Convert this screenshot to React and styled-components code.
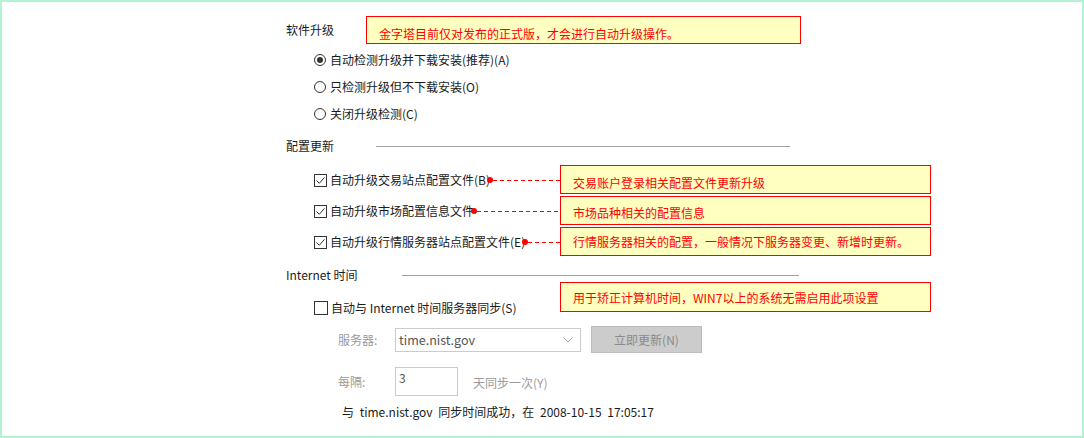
import React from "react";
import styled, { createGlobalStyle } from "styled-components";

const GlobalStyle = createGlobalStyle`
  html, body {
    margin: 0;
    padding: 0;
    background: #fff;
  }
  body {
    font-family: "Noto Sans CJK SC", "Microsoft YaHei", sans-serif;
    font-size: 12px;
    color: #1a1a1a;
  }
`;

const Frame = styled.div`
  box-sizing: border-box;
  width: 1084px;
  height: 438px;
  border: 2px solid #b3f2d3;
  padding: 14px 0 0 284px;
  overflow: hidden;
`;

const HeadRow = styled.div`
  display: flex;
  align-items: center;
  height: ${(p) => p.$h || 20}px;
  margin-top: ${(p) => p.$mt || 0}px;
`;

const SectionTitle = styled.div`
  flex: none;
  width: ${(p) => p.$w}px;
  line-height: 16px;
  white-space: nowrap;
`;

const Rule = styled.div`
  width: ${(p) => p.$w}px;
  height: 1px;
  background: #a0a0a0;
`;

const Callout = styled.div`
  box-sizing: border-box;
  display: flex;
  align-items: center;
  flex: none;
  align-self: ${(p) => p.$self || "center"};
  width: ${(p) => p.$w}px;
  height: ${(p) => p.$h}px;
  padding: ${(p) => p.$pt || 0}px 0 0 12px;
  background: #ffffc0;
  border: 1px solid #ff0000;
  color: #ff0000;
  line-height: 16px;
  white-space: nowrap;
`;

const RadioList = styled.div`
  display: flex;
  flex-direction: column;
  margin: 2px 0 0 28px;
`;

const OptionRow = styled.label`
  display: flex;
  align-items: center;
  height: 27px;
  line-height: 16px;
  white-space: nowrap;
`;

const Radio = styled.span`
  box-sizing: border-box;
  display: flex;
  align-items: center;
  justify-content: center;
  width: 12px;
  height: 12px;
  margin-right: 4px;
  border: 1px solid #333;
  border-radius: 50%;
  &::after {
    content: "";
    width: 6px;
    height: 6px;
    border-radius: 50%;
    background: ${(p) => (p.$on ? "#333" : "transparent")};
  }
`;

const CheckGrid = styled.div`
  display: grid;
  grid-template-columns: 246px 371px;
  grid-auto-rows: ${(p) => p.$h || 31}px;
  align-items: center;
  margin: ${(p) => p.$mt || 0}px 0 0 28px;
`;

const LabelGroup = styled.div`
  display: flex;
  align-items: center;
  align-self: ${(p) => p.$self || "center"};
  margin: ${(p) => p.$dy || 0}px 0 ${(p) => p.$db || 0}px;
  line-height: 16px;
  white-space: nowrap;
`;

const Box = styled.span`
  box-sizing: border-box;
  display: flex;
  align-items: center;
  justify-content: center;
  flex: none;
  width: ${(p) => p.$size || 13}px;
  height: ${(p) => p.$size || 13}px;
  margin-right: 3px;
  border: 1px solid #333;
  background: #fff;
`;

const Dot = styled.span`
  flex: none;
  width: 6px;
  height: 6px;
  margin-left: -3px;
  border-radius: 50%;
  background: #ff0000;
`;

const Leader = styled.span`
  flex: 1;
  height: 1px;
  background: repeating-linear-gradient(
    to right,
    #ff0000 0 4px,
    transparent 4px 7px
  );
`;

const FieldRow = styled.div`
  display: flex;
  align-items: center;
  margin: ${(p) => p.$mt || 0}px 0 0 52px;
`;

const FieldLabel = styled.div`
  flex: none;
  width: 57px;
  color: #9a9a9a;
  line-height: 16px;
`;

const Select = styled.div`
  box-sizing: border-box;
  display: flex;
  align-items: center;
  justify-content: space-between;
  width: 186px;
  height: 24px;
  padding: 0 7px 0 3px;
  border: 1px solid #cbcbcb;
  color: #555;
  font-size: 12.5px;
`;

const Button = styled.div`
  box-sizing: border-box;
  display: flex;
  align-items: center;
  justify-content: center;
  width: 111px;
  height: 27px;
  margin-left: 10px;
  background: #cccccc;
  border: 1px solid #bdbdbd;
  color: #8a8a8a;
  font-size: 12px;
`;

const NumInput = styled.div`
  box-sizing: border-box;
  width: 63px;
  height: 29px;
  padding: 2px 0 0 3px;
  border: 1px solid #cbcbcb;
  color: #555;
  line-height: 16px;
`;

const Hint = styled.div`
  margin: 3px 0 0 15px;
  color: #9a9a9a;
  line-height: 16px;
`;

const Status = styled.div`
  margin: 8px 0 0 56px;
  line-height: 16px;
  word-spacing: 3px;
  white-space: nowrap;
`;

const Check = () => (
  <Box>
    <svg width="11" height="11" viewBox="0 0 11 11">
      <path d="M1.5 5.5 L4.3 8.3 L9.5 2.3" fill="none" stroke="#333" strokeWidth="1" />
    </svg>
  </Box>
);

const configRows = [
  { label: "自动升级交易站点配置文件(B)", note: "交易账户登录相关配置文件更新升级", pt: 6 },
  { label: "自动升级市场配置信息文件", note: "市场品种相关的配置信息", pt: 5 },
  { label: "自动升级行情服务器站点配置文件(E)", note: "行情服务器相关的配置，一般情况下服务器变更、新增时更新。", pt: 0 },
];

export default function App() {
  return (
    <Frame>
      <GlobalStyle />
      <HeadRow $h={28}>
        <SectionTitle $w={80}>软件升级</SectionTitle>
        <Callout $w={435} $h={28} $pt={8}>
          金字塔目前仅对发布的正式版，才会进行自动升级操作。
        </Callout>
      </HeadRow>

      <RadioList>
        <OptionRow>
          <Radio $on />
          自动检测升级并下载安装(推荐)(A)
        </OptionRow>
        <OptionRow>
          <Radio />
          只检测升级但不下载安装(O)
        </OptionRow>
        <OptionRow>
          <Radio />
          关闭升级检测(C)
        </OptionRow>
      </RadioList>

      <HeadRow $mt={9}>
        <SectionTitle $w={90}>配置更新</SectionTitle>
        <Rule $w={414} />
      </HeadRow>

      <CheckGrid $mt={8}>
        {configRows.map((r) => (
          <React.Fragment key={r.label}>
            <LabelGroup $dy={1}>
              <Check />
              {r.label}
              <Dot />
              <Leader />
            </LabelGroup>
            <Callout $w={371} $h={29} $pt={r.pt}>
              {r.note}
            </Callout>
          </React.Fragment>
        ))}
      </CheckGrid>

      <HeadRow $mt={10} $h={16}>
        <SectionTitle $w={116}>Internet 时间</SectionTitle>
        <Rule $w={397} />
      </HeadRow>

      <CheckGrid $h={34} $mt={-1}>
        <LabelGroup $self="end" $db={0}>
          <Box $size={14} />
          自动与 Internet 时间服务器同步(S)
        </LabelGroup>
        <Callout $w={371} $h={30} $pt={2} $self="start">
          用于矫正计算机时间，WIN7以上的系统无需启用此项设置
        </Callout>
      </CheckGrid>

      <FieldRow $mt={10}>
        <FieldLabel>服务器:</FieldLabel>
        <Select>
          time.nist.gov
          <svg width="10" height="6" viewBox="0 0 10 6">
            <path d="M0.5 0.5 L5 5 L9.5 0.5" fill="none" stroke="#a0a0a0" strokeWidth="1" />
          </svg>
        </Select>
        <Button>立即更新(N)</Button>
      </FieldRow>

      <FieldRow $mt={14}>
        <FieldLabel>每隔:</FieldLabel>
        <NumInput>3</NumInput>
        <Hint>天同步一次(Y)</Hint>
      </FieldRow>

      <Status>与 time.nist.gov 同步时间成功，在 2008-10-15 17:05:17</Status>
    </Frame>
  );
}
